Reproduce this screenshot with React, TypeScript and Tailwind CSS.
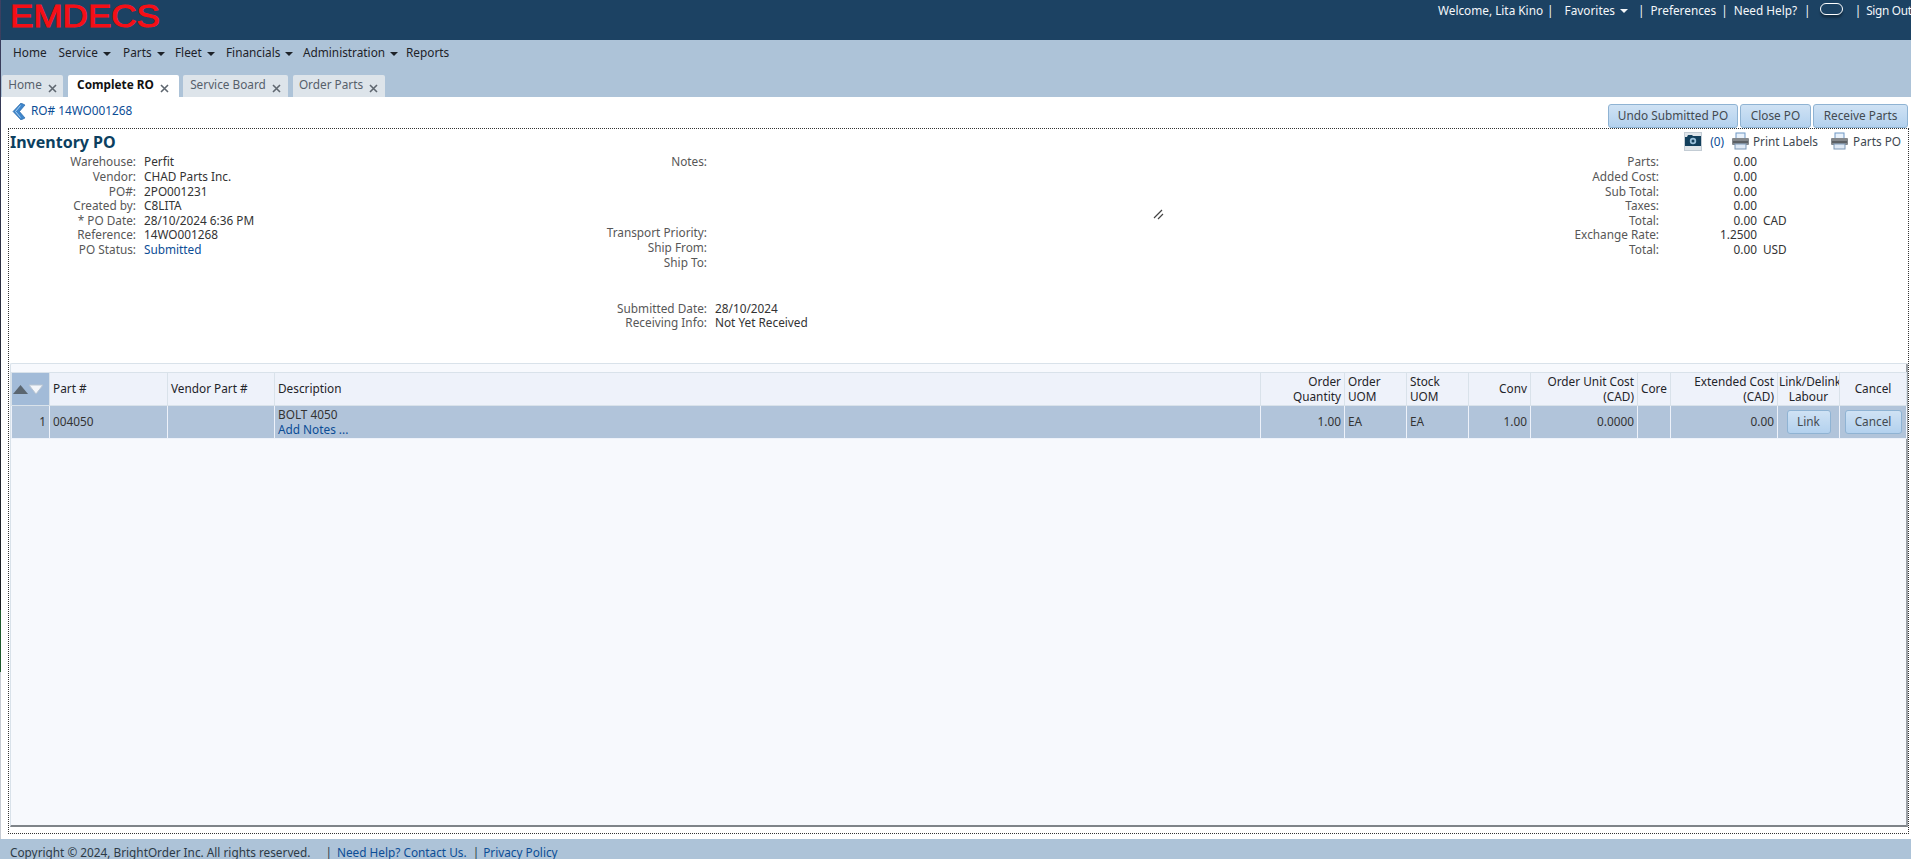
const nav = [
  { label: "Home", width: "w-[45.5px]", caret: false },
  { label: "Service", width: "w-[64.5px]", caret: true },
  { label: "Parts", width: "w-[52px]", caret: true },
  { label: "Fleet", width: "w-[51px]", caret: true },
  { label: "Financials", width: "w-[77px]", caret: true },
  { label: "Administration", width: "w-[103px]", caret: true },
  { label: "Reports", width: "w-[50px]", caret: false },
];

const tabs = [
  { label: "Home", width: "w-[61px]", active: false },
  { label: "Complete RO", width: "w-[111px]", active: true },
  { label: "Service Board", width: "w-[105px]", active: false },
  { label: "Order Parts", width: "w-[92px]", active: false },
];

const leftRows = [
  ["Warehouse:", "Perfit"],
  ["Vendor:", "CHAD Parts Inc."],
  ["PO#:", "2PO001231"],
  ["Created by:", "C8LITA"],
  ["* PO Date:", "28/10/2024 6:36 PM"],
  ["Reference:", "14WO001268"],
  ["PO Status:", "Submitted"],
];

const totals = [
  ["Parts:", "0.00", ""],
  ["Added Cost:", "0.00", ""],
  ["Sub Total:", "0.00", ""],
  ["Taxes:", "0.00", ""],
  ["Total:", "0.00", "CAD"],
  ["Exchange Rate:", "1.2500", ""],
  ["Total:", "0.00", "USD"],
];

const columns = [
  "w-[38px]",
  "w-[118px]",
  "w-[107px]",
  "w-[986px]",
  "w-[84px]",
  "w-[62px]",
  "w-[62px]",
  "w-[62px]",
  "w-[107px]",
  "w-[33px]",
  "w-[107px]",
  "w-[62px]",
  "w-[67px]",
];

const Caret = () => (
  <span className="ml-[5px] inline-block h-0 w-0 shrink-0 border-x-[4px] border-t-[4px] border-x-transparent border-t-current align-middle" />
);

const Close = () => (
  <svg width="9" height="9" viewBox="0 0 9 9" className="ml-[6px] mt-[7px] shrink-0">
    <path d="M1 1l7 7M8 1l-7 7" stroke="#5f6770" strokeWidth="1.6" />
  </svg>
);

const Printer = () => (
  <svg width="19" height="19" viewBox="0 0 19 19" className="shrink-0">
    <rect x="5" y="1" width="9" height="6" fill="#e8f1fb" stroke="#6f97c4" />
    <rect x="1" y="6" width="17" height="7" rx="1" fill="#84888c" />
    <rect x="2" y="9" width="15" height="2" fill="#5c6064" />
    <rect x="4" y="12" width="11" height="5" fill="#dfe9f5" stroke="#7d97b5" />
  </svg>
);

const Camera = () => (
  <svg width="18" height="19" viewBox="0 0 18 19" className="shrink-0">
    <rect x="0.5" y="0.5" width="17" height="18" fill="#dfe5ea" stroke="#c3ccd4" />
    <path d="M1 5h2l1-2h4l1 1h8v10H1z" fill="#123f5c" />
    <circle cx="9" cy="9" r="3.2" fill="#9cc2dc" />
    <circle cx="9" cy="9" r="1.5" fill="#123f5c" />
  </svg>
);

const Btn = ({ children, className }: { children: string; className: string }) => (
  <button className={`flex items-center justify-center rounded-[3px] border border-[#8fb3d3] bg-gradient-to-b from-[#cfe2f4] to-[#b3d1ee] text-[#434a50] ${className}`}>
    {children}
  </button>
);

const Row = ({ label, value, labelWidth, valueClass }: { label: string; value?: string; labelWidth: string; valueClass?: string }) => (
  <div className="flex h-[14.67px] whitespace-nowrap leading-[14.67px]">
    <span className={`${labelWidth} shrink-0 text-right text-[#575757]`}>{label}</span>
    <span className={`ml-[8px] ${valueClass ?? "text-[#333333]"}`}>{value}</span>
  </div>
);

export default function App() {
  return (
    <div className="relative flex h-[859px] w-[1911px] flex-col overflow-hidden bg-white font-['Noto_Sans','Liberation_Sans',sans-serif] text-[11.8px]">
      {/* stray window edge on the left of the capture */}
      <div className="absolute left-0 top-0 flex h-[839px] w-px flex-col">
        <div className="h-[610px] bg-gradient-to-b from-[#3d4163] to-[#15181c]" />
        <div className="h-[62px] bg-[#1c5a2c]" />
        <div className="flex-1 bg-[#c6cbd3]" />
      </div>

      {/* header */}
      <header className="flex h-[40px] shrink-0 justify-between overflow-hidden bg-[#1c4263] text-white">
        <svg width="164" height="40" viewBox="0 0 164 40" className="shrink-0">
          <text x="10" y="27" textLength="150" lengthAdjust="spacingAndGlyphs" fontFamily="Liberation Sans" fontWeight="400" fontSize="31" fill="#f50f16" stroke="#f50f16" strokeWidth="1">
            EMDECS
          </text>
        </svg>
        <div className="flex h-[21px] w-[473px] shrink-0 items-center whitespace-nowrap text-[#f4f7fa]">
          <span>Welcome, Lita Kino</span>
          <span className="ml-[4px]">|</span>
          <span className="ml-[11px]">Favorites</span>
          <Caret />
          <span className="ml-[10px]">|</span>
          <span className="ml-[6px]">Preferences</span>
          <span className="ml-[5px]">|</span>
          <span className="ml-[6px]">Need Help?</span>
          <span className="ml-[7px]">|</span>
          <span className="ml-[9px] h-[12px] w-[23px] shrink-0 -translate-y-[2px] rounded-[6px] border border-white shadow-[0_3px_2px_rgba(0,0,0,0.3)]" />
          <span className="ml-[12px]">|</span>
          <span className="ml-[5px] tracking-[-0.3px]">Sign Out</span>
        </div>
      </header>

      {/* nav and tabs */}
      <div className="flex h-[57px] shrink-0 flex-col justify-between bg-[#adc3d8]">
        <nav className="flex h-[25px] items-center pl-[13px] text-[#1d2228]">
          {nav.map((n) => (
            <span key={n.label} className={`${n.width} shrink-0 whitespace-nowrap`}>
              {n.label}
              {n.caret && <Caret />}
            </span>
          ))}
        </nav>
        <div className="flex h-[22px] items-stretch gap-[4.5px] pl-[2px]">
          {tabs.map((t) => (
            <div
              key={t.label}
              className={`${t.width} flex items-center justify-center rounded-t-[2px] pb-[2px] whitespace-nowrap ${t.active ? "bg-white font-bold text-[#111111]" : "bg-[#dde4ea] text-[#56606a]"}`}
            >
              {t.label}
              <Close />
            </div>
          ))}
        </div>
      </div>

      {/* page */}
      <main className="flex min-h-0 flex-1 flex-col">
        <div className="flex h-[31px] shrink-0 items-center justify-between pr-[3px]">
          <div className="flex items-center pb-[3px] pl-[12px] text-[#0b4d96]">
            <svg width="14" height="17" viewBox="0 0 14 17" className="shrink-0">
              <path d="M9 0L1 8.5 9 17l4-2-5.5-6.5L13 2z" fill="#3f86cc" stroke="#1f5f9f" strokeWidth="0.6" />
              <path d="M8.5 2.5L3.5 8.5l5 6" fill="none" stroke="#a9d0f2" strokeWidth="1" />
            </svg>
            <span className="ml-[5px]">RO# 14WO001268</span>
          </div>
          <div className="flex gap-[2px] self-end">
            <Btn className="h-[24px] w-[130px]">Undo Submitted PO</Btn>
            <Btn className="h-[24px] w-[71px]">Close PO</Btn>
            <Btn className="h-[24px] w-[95px]">Receive Parts</Btn>
          </div>
        </div>

        <section className="ml-[8px] mr-[2px] flex min-h-0 flex-1 flex-col border border-dotted border-[#333333]">
          <div className="flex h-[25px] shrink-0 items-center justify-between pl-[1px]">
            <h1 className="text-[16px] font-bold text-[#0c3f60]">Inventory PO</h1>
            <div className="flex items-center whitespace-nowrap pr-[7px] text-[#3d4750]">
              <Camera />
              <span className="ml-[8px] text-[#0b4d96]">(0)</span>
              <span className="ml-[7px]"><Printer /></span>
              <span className="ml-[3px]">Print Labels</span>
              <span className="ml-[12px]"><Printer /></span>
              <span className="ml-[4px]">Parts PO</span>
            </div>
          </div>

          <div className="flex h-[209px] shrink-0 pt-[0.2px]">
            <div className="w-[490px] shrink-0">
              {leftRows.map(([label, value]) => (
                <Row key={label} label={label} value={value} labelWidth="w-[127px]" valueClass={label === "PO Status:" ? "text-[#0b4d96]" : "text-[#333333]"} />
              ))}
            </div>
            <div className="w-[900px] shrink-0">
              <div className="flex h-[71px]">
                <span className="h-[14.67px] w-[208px] shrink-0 text-right leading-[14.67px] text-[#575757]">Notes:</span>
                <div className="ml-[8px] flex w-[449px] items-end justify-end pb-[5px]">
                  <svg width="11" height="11" viewBox="0 0 11 11">
                    <path d="M1 9l8-8M5 10l5-5" stroke="#444444" strokeWidth="1.2" />
                  </svg>
                </div>
              </div>
              <Row label="Transport Priority:" labelWidth="w-[208px]" />
              <Row label="Ship From:" labelWidth="w-[208px]" />
              <Row label="Ship To:" labelWidth="w-[208px]" />
              <div className="h-[31.5px]" />
              <Row label="Submitted Date:" value="28/10/2024" labelWidth="w-[208px]" />
              <Row label="Receiving Info:" value="Not Yet Received" labelWidth="w-[208px]" />
            </div>
            <div>
              {totals.map(([label, value, unit], i) => (
                <div key={i} className="flex h-[14.67px] whitespace-nowrap leading-[14.67px]">
                  <span className="w-[260px] shrink-0 text-right text-[#575757]">{label}</span>
                  <span className="w-[98px] shrink-0 text-right text-[#333333]">{value}</span>
                  <span className="ml-[6px] text-[#333333]">{unit}</span>
                </div>
              ))}
            </div>
          </div>

          {/* grid panel */}
          <div className="ml-[1px] flex h-[464px] shrink-0 flex-col rounded-t-[2px] border-t border-b-2 border-l border-r-2 border-[#d9e2ea] border-r-[#9a9fa4] border-b-[#7f8489] bg-[#f7f9fd] pt-[8px]">
            <table className="w-full table-fixed border-collapse">
              <colgroup>
                {columns.map((c, i) => (
                  <col key={i} className={c} />
                ))}
              </colgroup>
              <thead>
                <tr className="h-[33px] bg-[#eef2fa] text-[#1f2429]">
                  <th className="border border-[#d9e2ea] bg-[#a2bbd8] p-0 font-normal">
                    <svg width="34" height="14" viewBox="0 0 34 14">
                      <path d="M1 12L8.5 3l7.5 9z" fill="#5b6670" />
                      <path d="M17 3h14l-7 9z" fill="#f3f6fa" stroke="#b9c5d2" />
                    </svg>
                  </th>
                  <th className="border border-[#d9e2ea] px-[3px] text-left font-normal">Part #</th>
                  <th className="border border-[#d9e2ea] px-[3px] text-left font-normal">Vendor Part #</th>
                  <th className="border border-[#d9e2ea] px-[3px] text-left font-normal">Description</th>
                  <th className="border border-[#d9e2ea] px-[3px] text-right font-normal leading-[15px]">Order Quantity</th>
                  <th className="border border-[#d9e2ea] px-[3px] text-left font-normal leading-[15px]">Order UOM</th>
                  <th className="border border-[#d9e2ea] px-[3px] text-left font-normal leading-[15px]">Stock UOM</th>
                  <th className="border border-[#d9e2ea] px-[3px] text-right font-normal">Conv</th>
                  <th className="border border-[#d9e2ea] px-[3px] text-right font-normal leading-[15px]">Order Unit Cost (CAD)</th>
                  <th className="border border-[#d9e2ea] px-[3px] text-left font-normal">Core</th>
                  <th className="border border-[#d9e2ea] px-[3px] text-right font-normal leading-[15px]">Extended Cost (CAD)</th>
                  <th className="overflow-hidden whitespace-nowrap border border-[#d9e2ea] px-[1px] text-center font-normal leading-[15px]">
                    Link/Delink
                    <br />
                    Labour
                  </th>
                  <th className="border border-[#d9e2ea] px-[3px] text-center font-normal">Cancel</th>
                </tr>
              </thead>
              <tbody>
                <tr className="h-[33px] bg-[#b1c4da] text-[#333333]">
                  <td className="border border-[#eef2fa] px-[3px] text-right">1</td>
                  <td className="border border-[#eef2fa] px-[3px]">004050</td>
                  <td className="border border-[#eef2fa] px-[3px]" />
                  <td className="border border-[#eef2fa] px-[3px] leading-[15px]">
                    BOLT 4050
                    <br />
                    <span className="text-[#0b4d96]">Add Notes ...</span>
                  </td>
                  <td className="border border-[#eef2fa] px-[3px] text-right">1.00</td>
                  <td className="border border-[#eef2fa] px-[3px]">EA</td>
                  <td className="border border-[#eef2fa] px-[3px]">EA</td>
                  <td className="border border-[#eef2fa] px-[3px] text-right">1.00</td>
                  <td className="border border-[#eef2fa] px-[3px] text-right">0.0000</td>
                  <td className="border border-[#eef2fa] px-[3px]" />
                  <td className="border border-[#eef2fa] px-[3px] text-right">0.00</td>
                  <td className="border border-[#eef2fa] p-0">
                    <Btn className="mx-auto h-[24px] w-[44px]">Link</Btn>
                  </td>
                  <td className="border border-[#eef2fa] p-0">
                    <Btn className="mx-auto h-[24px] w-[57px]">Cancel</Btn>
                  </td>
                </tr>
              </tbody>
            </table>
          </div>
        </section>
        <div className="h-[5px] shrink-0" />
      </main>

      {/* footer */}
      <footer className="flex h-[20px] shrink-0 items-center whitespace-nowrap bg-[#adc3d8] pl-[10px] pt-[8px] text-[#2c3a46]">
        <span>Copyright © 2024, BrightOrder Inc. All rights reserved.</span>
        <span className="ml-[15px]">|</span>
        <span className="ml-[5px] text-[#0b4d96]">Need Help? Contact Us.</span>
        <span className="ml-[6px]">|</span>
        <span className="ml-[4px] text-[#0b4d96]">Privacy Policy</span>
      </footer>
    </div>
  );
}
